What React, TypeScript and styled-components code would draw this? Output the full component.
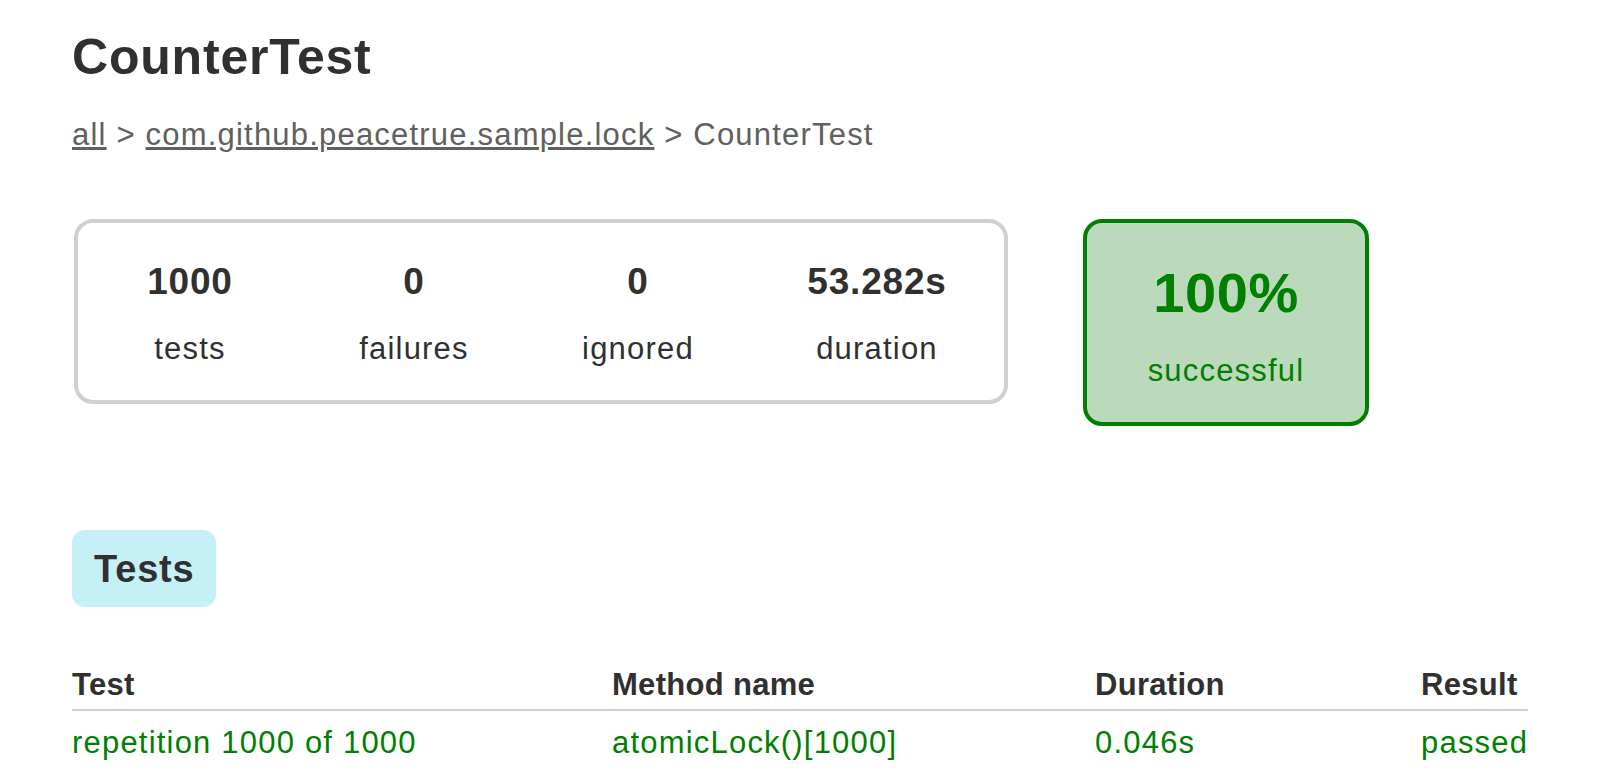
import React from 'react';
import styled, { createGlobalStyle } from 'styled-components';

const GlobalStyle = createGlobalStyle`
  body {
    margin: 0;
    background: #ffffff;
    color: #303030;
    font-family: "Liberation Sans", Arial, sans-serif;
    font-size: 31px;
  }
`;

const Content = styled.div`
  padding: 29px 72px 0;
`;

const Title = styled.h1`
  margin: 0;
  font-size: 50px;
  line-height: 57.5px;
  font-weight: bold;
  letter-spacing: 0.8px;
  white-space: nowrap;
`;

const Breadcrumbs = styled.div`
  margin-top: 30px;
  color: #606060;
  line-height: 36px;
  letter-spacing: 1.2px;
  white-space: nowrap;

  a {
    color: #606060;
    text-decoration: underline;
  }
`;

const Summary = styled.div`
  display: flex;
  align-items: flex-start;
  margin-top: 66px;
`;

const SummaryGroup = styled.div`
  margin-left: 2px;
  border: 4px solid #d0d0d0;
  border-radius: 19px;
  display: grid;
  grid-template-columns: 224px 224px 224px 254px;
`;

const InfoBox = styled.div`
  text-align: center;
  padding: 38px 0 33px;
`;

const Counter = styled.div`
  font-size: 37px;
  font-weight: bold;
  line-height: 42px;
  letter-spacing: 0.8px;
  margin-bottom: 28px;
`;

const Label = styled.div`
  line-height: 36px;
  letter-spacing: 1.2px;
`;

const SuccessRate = styled.div`
  box-sizing: border-box;
  width: 286px;
  margin-left: 75px;
  border: 4px solid #008000;
  border-radius: 19px;
  background: #bbd9bb;
  color: #008000;
  text-align: center;
  padding: 38px 0 33px;
`;

const Percent = styled.div`
  font-size: 56px;
  font-weight: bold;
  line-height: 64px;
  letter-spacing: 0.6px;
  margin-bottom: 28px;
`;

const TabLinks = styled.ul`
  list-style: none;
  margin: 104px 0 0;
  padding: 0;
  display: flex;
`;

const TabItem = styled.li<{ $selected?: boolean }>`
  background: ${(p) => (p.$selected ? '#c5f0f5' : '#f0f0f0')};
  border-radius: 13px;
  padding: 17px 22px 16px;
`;

const TabTitle = styled.h2`
  margin: 0;
  font-size: 38px;
  line-height: 44px;
  font-weight: bold;
  letter-spacing: 0.8px;
  color: #303030;
`;

const Table = styled.table`
  margin-top: 60px;
  width: 1456px;
  border-collapse: collapse;
  table-layout: fixed;
`;

const Th = styled.th<{ $w: number }>`
  width: ${(p) => p.$w}px;
  text-align: left;
  white-space: nowrap;
  font-weight: bold;
  line-height: 36px;
  letter-spacing: 0.3px;
  padding: 0 0 6px;
  border-bottom: 2px solid #d0d0d0;
`;

const Td = styled.td`
  white-space: nowrap;
  color: #008000;
  line-height: 36px;
  letter-spacing: 1.2px;
  padding: 14px 0 10px;
`;

const counters = [
  { value: '1000', label: 'tests' },
  { value: '0', label: 'failures' },
  { value: '0', label: 'ignored' },
  { value: '53.282s', label: 'duration' },
];

const columns = [
  { name: 'Test', width: 540 },
  { name: 'Method name', width: 483 },
  { name: 'Duration', width: 326 },
  { name: 'Result', width: 107 },
];

const rows = [['repetition 1000 of 1000', 'atomicLock()[1000]', '0.046s', 'passed']];

export default function App() {
  return (
    <>
      <GlobalStyle />
      <Content>
        <Title>CounterTest</Title>
        <Breadcrumbs>
          <a href="#">all</a> &gt; <a href="#">com.github.peacetrue.sample.lock</a> &gt; CounterTest
        </Breadcrumbs>

        <Summary>
          <SummaryGroup>
            {counters.map((c) => (
              <InfoBox key={c.label}>
                <Counter>{c.value}</Counter>
                <Label>{c.label}</Label>
              </InfoBox>
            ))}
          </SummaryGroup>
          <SuccessRate>
            <Percent>100%</Percent>
            <Label>successful</Label>
          </SuccessRate>
        </Summary>

        <TabLinks>
          <TabItem $selected>
            <TabTitle>Tests</TabTitle>
          </TabItem>
        </TabLinks>

        <Table>
          <thead>
            <tr>
              {columns.map((c) => (
                <Th key={c.name} $w={c.width}>
                  {c.name}
                </Th>
              ))}
            </tr>
          </thead>
          <tbody>
            {rows.map((r) => (
              <tr key={r[0]}>
                {r.map((cell, i) => (
                  <Td key={i}>{cell}</Td>
                ))}
              </tr>
            ))}
          </tbody>
        </Table>
      </Content>
    </>
  );
}
